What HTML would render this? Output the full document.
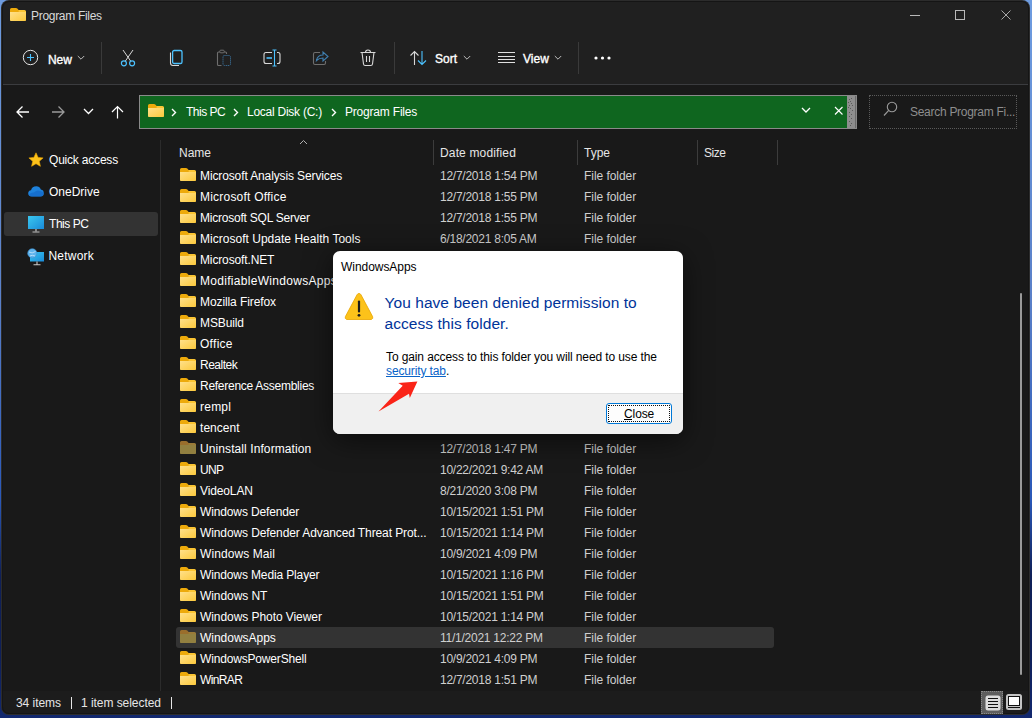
<!DOCTYPE html>
<html><head><meta charset='utf-8'><style>
html,body{margin:0;padding:0;width:1032px;height:718px;overflow:hidden;background:#191919}
body{position:relative;font-family:"Liberation Sans",sans-serif}
.r{position:absolute}
.t{position:absolute;white-space:nowrap;font-family:"Liberation Sans",sans-serif}
</style></head><body>
<svg width='0' height='0' style='position:absolute'><defs><linearGradient id='fg' x1='0' y1='0' x2='1' y2='1'><stop offset='0' stop-color='#ffe08a'/><stop offset='1' stop-color='#fcc93c'/></linearGradient><linearGradient id='mg' x1='0' y1='0' x2='1' y2='1'><stop offset='0' stop-color='#3ac8f0'/><stop offset='1' stop-color='#1a8ad8'/></linearGradient></defs></svg>
<div class='r' style='left:0;top:0;width:1032px;height:718px;background:linear-gradient(180deg,#6e9ce0 0px,#5a80c8 300px,#2a58b8 500px,#0f2058 575px,#0e1f58 650px,#12286f 718px)'></div><div class='r' style='left:1px;top:0px;width:1029px;height:715px;background:#202020;border-radius:8px;border:1px solid rgba(70,70,70,0.32);box-sizing:border-box;overflow:hidden'></div><div class='r' style='left:2px;top:85px;width:1027px;height:606px;background:#191919;'></div><div class='r' style='left:2px;top:84px;width:1027px;height:1px;background:#3b3c3f;'></div><div class='r' style='left:2px;top:691px;width:1027px;height:23px;background:#1c1c1c;border-radius:0 0 7px 7px'></div><div class='r' style='left:2px;top:1px;width:1027px;height:713px;border-radius:7px;box-shadow:inset 0 0 0 1px #151515'></div><svg class='r' style='left:10px;top:8px;' width='16' height='13' viewBox='0 0 16 13'><path d='M0 3 H16 V11.5 Q16 13 14.5 13 H1.5 Q0 13 0 11.5 Z M8 2 H14.5 Q16 2 16 3.5 V5 H8 Z' fill='#fac433'/><path d='M0 1.5 Q0 0 1.5 0 H6 Q6.8 0 7.3 0.6 L8.6 2 V4.5 H0 Z' fill='#edaa0b'/><path d='M0 4 H16 V11.5 Q16 13 14.5 13 H1.5 Q0 13 0 11.5 Z' fill='url(#fg)'/></svg><div class='t' style='left:31px;top:10px;font-size:12px;line-height:12px;color:#d9d9d9;letter-spacing:-0.3px;'>Program Files</div><div class='r' style='left:910px;top:15px;width:10px;height:1px;background:#b8b8b8;'></div><div class='r' style='left:955px;top:10px;width:10px;height:10px;background:transparent;border:1px solid #b8b8b8;box-sizing:border-box;'></div><svg class='r' style='left:1000px;top:9px;' width='12' height='12' viewBox='0 0 12 12'><path d='M1.5 1.5 L10.5 10.5 M10.5 1.5 L1.5 10.5' stroke='#b8b8b8' stroke-width='0.9'/></svg><svg class='r' style='left:22px;top:49px;' width='17' height='17' viewBox='0 0 17 17'><circle cx='8.5' cy='8.5' r='7.2' fill='none' stroke='#e6e6e6' stroke-width='1'/><path d='M8.5 5 V12 M5 8.5 H12' stroke='#4cc2ff' stroke-width='1.1'/></svg><div class='t' style='left:48px;top:54px;font-size:12px;line-height:12px;color:#ffffff;letter-spacing:-0.1px;-webkit-text-stroke:0.35px #fff;'>New</div><svg class='r' style='left:77px;top:55px;' width='8' height='6' viewBox='0 0 8 6'><path d='M0.8 1 L4 4.2 L7.2 1' fill='none' stroke='#bdbdbd' stroke-width='1'/></svg><div class='r' style='left:101px;top:42px;width:1px;height:32px;background:#3a3a3a;'></div><svg class='r' style='left:119px;top:49px;' width='18' height='18' viewBox='0 0 18 18'><path d='M4 1 L11.6 12 M14 1 L6.4 12' stroke='#d8d8d8' stroke-width='1'/><circle cx='4.9' cy='14.3' r='2.5' fill='none' stroke='#4cc2ff' stroke-width='1.2'/><circle cx='13.1' cy='14.3' r='2.5' fill='none' stroke='#4cc2ff' stroke-width='1.2'/></svg><svg class='r' style='left:168px;top:49px;' width='16' height='18' viewBox='0 0 16 18'><path d='M2.5 3.5 V14 Q2.5 16.5 5 16.5 H11' fill='none' stroke='#d8d8d8' stroke-width='1.1'/><rect x='4.6' y='1.5' width='9.4' height='13' rx='1.6' fill='none' stroke='#4cc2ff' stroke-width='1.3'/></svg><svg class='r' style='left:215px;top:49px;' width='18' height='18' viewBox='0 0 18 18'><path d='M5 3 H3.5 Q2.5 3 2.5 4 V15.5 Q2.5 16.5 3.5 16.5 H6.5 M9 3 H10.5 Q11.5 3 11.5 4 V5' fill='none' stroke='#6e6e6e' stroke-width='1.1'/><rect x='4.8' y='1.2' width='4.4' height='2.6' rx='1' fill='none' stroke='#6e6e6e' stroke-width='1'/><rect x='8' y='6.5' width='7.5' height='10' rx='1.5' fill='none' stroke='#3f7fb0' stroke-width='1' stroke-dasharray='1 1'/></svg><svg class='r' style='left:262px;top:49px;' width='20' height='18' viewBox='0 0 20 18'><path d='M10 3.5 H4 Q2 3.5 2 5.5 V12.5 Q2 14.5 4 14.5 H10 M15 3.5 H16 Q18 3.5 18 5.5 V12.5 Q18 14.5 16 14.5 H15' fill='none' stroke='#d8d8d8' stroke-width='1.1'/><path d='M12.5 1 V17 M10.5 1 H14.5 M10.5 17 H14.5' stroke='#4cc2ff' stroke-width='1.1'/><path d='M4.5 9 H10' stroke='#4cc2ff' stroke-width='1.6'/></svg><svg class='r' style='left:312px;top:49px;' width='18' height='18' viewBox='0 0 18 18'><path d='M8 3.5 H3 Q1.5 3.5 1.5 5 V14 Q1.5 15.5 3 15.5 H12 Q13.5 15.5 13.5 14 V12' fill='none' stroke='#6e6e6e' stroke-width='1.1'/><path d='M4.5 11.5 Q5.5 6 11 6 V3 L16 7.5 L11 12 V9 Q7 9 4.5 11.5 Z' fill='none' stroke='#3f7fb0' stroke-width='1.1'/></svg><svg class='r' style='left:359px;top:49px;' width='18' height='18' viewBox='0 0 18 18'><path d='M1.5 3.5 H16.5 M6.5 3.5 Q6.5 1 9 1 Q11.5 1 11.5 3.5' fill='none' stroke='#d8d8d8' stroke-width='1.1'/><path d='M3 3.5 L4.5 15 Q4.7 16.5 6.2 16.5 H11.8 Q13.3 16.5 13.5 15 L15 3.5' fill='none' stroke='#d8d8d8' stroke-width='1.1'/><path d='M7.5 7 V13 M10.5 7 V13' stroke='#d8d8d8' stroke-width='1.1'/></svg><div class='r' style='left:394px;top:42px;width:1px;height:32px;background:#3a3a3a;'></div><svg class='r' style='left:409px;top:50px;' width='20' height='16' viewBox='0 0 20 16'><path d='M5.5 15 V1.5 M1.5 5.5 L5.5 1.5 L9.5 5.5' fill='none' stroke='#d8d8d8' stroke-width='1.1'/><path d='M13 1 V14.5 M9 10.5 L13 14.5 L17 10.5' fill='none' stroke='#4cc2ff' stroke-width='1.1'/></svg><div class='t' style='left:435px;top:53px;font-size:12px;line-height:12px;color:#ffffff;letter-spacing:0px;-webkit-text-stroke:0.35px #fff;'>Sort</div><svg class='r' style='left:463px;top:55px;' width='8' height='6' viewBox='0 0 8 6'><path d='M0.8 1 L4 4.2 L7.2 1' fill='none' stroke='#bdbdbd' stroke-width='1'/></svg><svg class='r' style='left:498px;top:51px;' width='18' height='14' viewBox='0 0 18 14'><path d='M0 1.5 H17 M0 5.5 H17 M0 8.5 H17 M0 11.5 H17' stroke='#e0e0e0' stroke-width='1'/></svg><div class='t' style='left:523px;top:53px;font-size:12px;line-height:12px;color:#ffffff;letter-spacing:0px;-webkit-text-stroke:0.35px #fff;'>View</div><svg class='r' style='left:554px;top:55px;' width='8' height='6' viewBox='0 0 8 6'><path d='M0.8 1 L4 4.2 L7.2 1' fill='none' stroke='#bdbdbd' stroke-width='1'/></svg><div class='r' style='left:578px;top:42px;width:1px;height:32px;background:#3a3a3a;'></div><svg class='r' style='left:594px;top:56px;' width='18' height='4' viewBox='0 0 18 4'><circle cx='2' cy='2' r='1.6' fill='#fff'/><circle cx='8.5' cy='2' r='1.6' fill='#fff'/><circle cx='15' cy='2' r='1.6' fill='#fff'/></svg><svg class='r' style='left:16px;top:105px;' width='14' height='14' viewBox='0 0 14 14'><path d='M13 7 H1.5 M6.5 1.5 L1 7 L6.5 12.5' fill='none' stroke='#ffffff' stroke-width='1.3'/></svg><svg class='r' style='left:51px;top:105px;' width='14' height='14' viewBox='0 0 14 14'><path d='M1 7 H12.5 M7.5 1.5 L13 7 L7.5 12.5' fill='none' stroke='#9a9a9a' stroke-width='1.3'/></svg><svg class='r' style='left:83px;top:108px;' width='11' height='7' viewBox='0 0 11 7'><path d='M1 1 L5.5 5.5 L10 1' fill='none' stroke='#ffffff' stroke-width='1.3'/></svg><svg class='r' style='left:111px;top:105px;' width='13' height='14' viewBox='0 0 13 14'><path d='M6.5 13.5 V1.5 M1 7 L6.5 1.5 L12 7' fill='none' stroke='#ffffff' stroke-width='1.2'/></svg><div class='r' style='left:139px;top:95px;width:718px;height:34px;background:#0f661f;border:1px solid #8a8a8a;box-sizing:border-box;'></div><div class='r' style='left:847px;top:96px;width:9px;height:32px;background:#8e8e8e;border-right:1px solid #6a6a6a;box-sizing:border-box;'></div><div class='r' style='left:849px;top:99px;width:1px;height:1px;background:#5a5a5a;'></div><div class='r' style='left:851px;top:98px;width:1px;height:1px;background:#5a5a5a;'></div><div class='r' style='left:850px;top:101px;width:1px;height:1px;background:#5a5a5a;'></div><div class='r' style='left:848px;top:102px;width:1px;height:1px;background:#5a5a5a;'></div><div class='r' style='left:851px;top:103px;width:1px;height:1px;background:#5a5a5a;'></div><div class='r' style='left:849px;top:105px;width:1px;height:1px;background:#5a5a5a;'></div><div class='r' style='left:852px;top:105px;width:1px;height:1px;background:#5a5a5a;'></div><div class='r' style='left:848px;top:107px;width:1px;height:1px;background:#5a5a5a;'></div><div class='r' style='left:850px;top:108px;width:1px;height:1px;background:#5a5a5a;'></div><div class='r' style='left:852px;top:110px;width:1px;height:1px;background:#5a5a5a;'></div><div class='r' style='left:849px;top:112px;width:1px;height:1px;background:#5a5a5a;'></div><div class='r' style='left:851px;top:114px;width:1px;height:1px;background:#5a5a5a;'></div><div class='r' style='left:849px;top:116px;width:1px;height:1px;background:#5a5a5a;'></div><div class='r' style='left:851px;top:118px;width:1px;height:1px;background:#5a5a5a;'></div><div class='r' style='left:849px;top:121px;width:1px;height:1px;background:#5a5a5a;'></div><div class='r' style='left:851px;top:123px;width:1px;height:1px;background:#5a5a5a;'></div><div class='r' style='left:850px;top:125px;width:1px;height:1px;background:#5a5a5a;'></div><svg class='r' style='left:148px;top:104px;' width='16' height='13' viewBox='0 0 16 13'><path d='M0 3 H16 V11.5 Q16 13 14.5 13 H1.5 Q0 13 0 11.5 Z M8 2 H14.5 Q16 2 16 3.5 V5 H8 Z' fill='#fac433'/><path d='M0 1.5 Q0 0 1.5 0 H6 Q6.8 0 7.3 0.6 L8.6 2 V4.5 H0 Z' fill='#edaa0b'/><path d='M0 4 H16 V11.5 Q16 13 14.5 13 H1.5 Q0 13 0 11.5 Z' fill='url(#fg)'/></svg><svg class='r' style='left:171px;top:108px;' width='6' height='9' viewBox='0 0 6 9'><path d='M1 1 L4.5 4.5 L1 8' fill='none' stroke='#fff' stroke-width='1.4'/></svg><svg class='r' style='left:233px;top:108px;' width='6' height='9' viewBox='0 0 6 9'><path d='M1 1 L4.5 4.5 L1 8' fill='none' stroke='#fff' stroke-width='1.4'/></svg><svg class='r' style='left:331px;top:108px;' width='6' height='9' viewBox='0 0 6 9'><path d='M1 1 L4.5 4.5 L1 8' fill='none' stroke='#fff' stroke-width='1.4'/></svg><div class='t' style='left:186px;top:106px;font-size:12px;line-height:12px;color:#fff;letter-spacing:-0.5px;'>This PC</div><div class='t' style='left:247px;top:106px;font-size:12px;line-height:12px;color:#fff;letter-spacing:-0.25px;'>Local Disk (C:)</div><div class='t' style='left:345px;top:106px;font-size:12px;line-height:12px;color:#fff;letter-spacing:-0.2px;'>Program Files</div><svg class='r' style='left:801px;top:107px;' width='10' height='7' viewBox='0 0 10 7'><path d='M1 1 L5 5 L9 1' fill='none' stroke='#fff' stroke-width='1.3'/></svg><svg class='r' style='left:834px;top:106px;' width='10' height='10' viewBox='0 0 10 10'><path d='M1 1 L8.5 8.5 M8.5 1 L1 8.5' stroke='#fff' stroke-width='1.15'/></svg><div class='r' style='left:869px;top:95px;width:148px;height:34px;background:transparent;border:1px dotted #5a5a5a;box-sizing:border-box;'></div><svg class='r' style='left:883px;top:101px;' width='15' height='16' viewBox='0 0 15 16'><circle cx='9' cy='6' r='4.7' fill='none' stroke='#9a9a9a' stroke-width='1.1'/><path d='M5.7 9.3 L1 14.5' stroke='#9a9a9a' stroke-width='1.2'/></svg><div class='t' style='left:910px;top:106px;font-size:12px;line-height:12px;color:#8e8e8e;letter-spacing:-0.28px;'>Search Program Fi...</div><div class='r' style='left:4px;top:212px;width:154px;height:24px;background:#333333;border-radius:3px;'></div><div class='r' style='left:160px;top:140px;width:1px;height:551px;background:#2b2b2b;'></div><svg class='r' style='left:28px;top:152px;' width='16' height='16' viewBox='0 0 16 16'><path d='M8 0.8 L10.1 5.4 L15.1 5.9 L11.3 9.3 L12.4 14.3 L8 11.7 L3.6 14.3 L4.7 9.3 L0.9 5.9 L5.9 5.4 Z' fill='#fcc21b' stroke='#f0a800' stroke-width='0.6' stroke-linejoin='round'/></svg><svg class='r' style='left:28px;top:185px;' width='16' height='12' viewBox='0 0 16 12'><path d='M4 11.5 Q0.2 11.5 0.2 8.3 Q0.2 5.6 3 5.2 Q4 1.3 8.3 1.3 Q11.6 1.3 12.8 4.6 Q15.8 5 15.8 8.2 Q15.8 11.5 12.5 11.5 Z' fill='#1e82dc'/><path d='M3 11.5 Q1 11.5 1.6 9 Q3 7 6 7.5 Q9 4.5 12 6 Q15.8 6.5 15.5 9.5 Q15 11.5 12.5 11.5 Z' fill='#1366c8' opacity='0.7'/></svg><svg class='r' style='left:28px;top:212px;' width='16' height='22' viewBox='0 0 16 22'><rect x='0' y='4' width='16' height='13' fill='url(#mg)'/><path d='M8 17 V19.5' stroke='#c8c8c8' stroke-width='1.2'/><path d='M4.5 20 H11.5' stroke='#bdbdbd' stroke-width='1'/></svg><svg class='r' style='left:27px;top:248px;' width='18' height='18' viewBox='0 0 18 18'><rect x='3' y='4' width='14' height='9.5' fill='url(#mg)'/><circle cx='5.3' cy='5.3' r='4.6' fill='#5fb4ec' stroke='#3c8fd0' stroke-width='0.6'/><path d='M2 4 Q5 6 8.5 3.5 M3 8 Q5 6.5 8 8' fill='none' stroke='#d9efff' stroke-width='0.7'/><path d='M10 13.5 V16.5 M6.5 16.8 H13.5' stroke='#c8c8c8' stroke-width='1.1'/></svg><div class='t' style='left:49px;top:154px;font-size:12px;line-height:12px;color:#fff;letter-spacing:-0.2px;'>Quick access</div><div class='t' style='left:49px;top:186px;font-size:12px;line-height:12px;color:#fff;letter-spacing:0px;'>OneDrive</div><div class='t' style='left:49px;top:218px;font-size:12px;line-height:12px;color:#fff;letter-spacing:-0.45px;'>This PC</div><div class='t' style='left:48.5px;top:250px;font-size:12px;line-height:12px;color:#fff;letter-spacing:0.2px;'>Network</div><svg class='r' style='left:299px;top:139px;' width='9' height='6' viewBox='0 0 9 6'><path d='M1 5 L4.5 1.5 L8 5' fill='none' stroke='#b0b0b0' stroke-width='1'/></svg><div class='t' style='left:179px;top:147px;font-size:12px;line-height:12px;color:#e6e6e6;'>Name</div><div class='t' style='left:440px;top:147px;font-size:12px;line-height:12px;color:#e6e6e6;letter-spacing:0.15px;'>Date modified</div><div class='t' style='left:584px;top:147px;font-size:12px;line-height:12px;color:#e6e6e6;'>Type</div><div class='t' style='left:704px;top:147px;font-size:12px;line-height:12px;color:#e6e6e6;letter-spacing:-0.5px;'>Size</div><div class='r' style='left:433px;top:140px;width:1px;height:25px;background:#3c3c3c;'></div><div class='r' style='left:577px;top:140px;width:1px;height:25px;background:#3c3c3c;'></div><div class='r' style='left:697px;top:140px;width:1px;height:25px;background:#3c3c3c;'></div><div class='r' style='left:777px;top:140px;width:1px;height:25px;background:#3c3c3c;'></div><div class='r' style='left:176px;top:627px;width:598px;height:21px;background:#333333;border-radius:3px;'></div><svg class='r' style='left:180px;top:168px;' width='16' height='13' viewBox='0 0 16 13'><path d='M0 3 H16 V11.5 Q16 13 14.5 13 H1.5 Q0 13 0 11.5 Z M8 2 H14.5 Q16 2 16 3.5 V5 H8 Z' fill='#fac433'/><path d='M0 1.5 Q0 0 1.5 0 H6 Q6.8 0 7.3 0.6 L8.6 2 V4.5 H0 Z' fill='#edaa0b'/><path d='M0 4 H16 V11.5 Q16 13 14.5 13 H1.5 Q0 13 0 11.5 Z' fill='url(#fg)'/></svg><div class='t' style='left:200px;top:170px;font-size:12px;line-height:12px;color:#fff;letter-spacing:-0.12px;'>Microsoft Analysis Services</div><div class='t' style='left:440px;top:170px;font-size:12px;line-height:12px;color:#cfcfcf;letter-spacing:-0.25px;'>12/7/2018 1:54 PM</div><div class='t' style='left:584px;top:170px;font-size:12px;line-height:12px;color:#cfcfcf;letter-spacing:-0.05px;'>File folder</div><svg class='r' style='left:180px;top:189px;' width='16' height='13' viewBox='0 0 16 13'><path d='M0 3 H16 V11.5 Q16 13 14.5 13 H1.5 Q0 13 0 11.5 Z M8 2 H14.5 Q16 2 16 3.5 V5 H8 Z' fill='#fac433'/><path d='M0 1.5 Q0 0 1.5 0 H6 Q6.8 0 7.3 0.6 L8.6 2 V4.5 H0 Z' fill='#edaa0b'/><path d='M0 4 H16 V11.5 Q16 13 14.5 13 H1.5 Q0 13 0 11.5 Z' fill='url(#fg)'/></svg><div class='t' style='left:200px;top:191px;font-size:12px;line-height:12px;color:#fff;letter-spacing:0.213px;'>Microsoft Office</div><div class='t' style='left:440px;top:191px;font-size:12px;line-height:12px;color:#cfcfcf;letter-spacing:-0.25px;'>12/7/2018 1:55 PM</div><div class='t' style='left:584px;top:191px;font-size:12px;line-height:12px;color:#cfcfcf;letter-spacing:-0.05px;'>File folder</div><svg class='r' style='left:180px;top:210px;' width='16' height='13' viewBox='0 0 16 13'><path d='M0 3 H16 V11.5 Q16 13 14.5 13 H1.5 Q0 13 0 11.5 Z M8 2 H14.5 Q16 2 16 3.5 V5 H8 Z' fill='#fac433'/><path d='M0 1.5 Q0 0 1.5 0 H6 Q6.8 0 7.3 0.6 L8.6 2 V4.5 H0 Z' fill='#edaa0b'/><path d='M0 4 H16 V11.5 Q16 13 14.5 13 H1.5 Q0 13 0 11.5 Z' fill='url(#fg)'/></svg><div class='t' style='left:200px;top:212px;font-size:12px;line-height:12px;color:#fff;letter-spacing:-0.225px;'>Microsoft SQL Server</div><div class='t' style='left:440px;top:212px;font-size:12px;line-height:12px;color:#cfcfcf;letter-spacing:-0.25px;'>12/7/2018 1:55 PM</div><div class='t' style='left:584px;top:212px;font-size:12px;line-height:12px;color:#cfcfcf;letter-spacing:-0.05px;'>File folder</div><svg class='r' style='left:180px;top:231px;' width='16' height='13' viewBox='0 0 16 13'><path d='M0 3 H16 V11.5 Q16 13 14.5 13 H1.5 Q0 13 0 11.5 Z M8 2 H14.5 Q16 2 16 3.5 V5 H8 Z' fill='#fac433'/><path d='M0 1.5 Q0 0 1.5 0 H6 Q6.8 0 7.3 0.6 L8.6 2 V4.5 H0 Z' fill='#edaa0b'/><path d='M0 4 H16 V11.5 Q16 13 14.5 13 H1.5 Q0 13 0 11.5 Z' fill='url(#fg)'/></svg><div class='t' style='left:200px;top:233px;font-size:12px;line-height:12px;color:#fff;letter-spacing:0.023px;'>Microsoft Update Health Tools</div><div class='t' style='left:440px;top:233px;font-size:12px;line-height:12px;color:#cfcfcf;letter-spacing:-0.25px;'>6/18/2021 8:05 AM</div><div class='t' style='left:584px;top:233px;font-size:12px;line-height:12px;color:#cfcfcf;letter-spacing:-0.05px;'>File folder</div><svg class='r' style='left:180px;top:252px;' width='16' height='13' viewBox='0 0 16 13'><path d='M0 3 H16 V11.5 Q16 13 14.5 13 H1.5 Q0 13 0 11.5 Z M8 2 H14.5 Q16 2 16 3.5 V5 H8 Z' fill='#fac433'/><path d='M0 1.5 Q0 0 1.5 0 H6 Q6.8 0 7.3 0.6 L8.6 2 V4.5 H0 Z' fill='#edaa0b'/><path d='M0 4 H16 V11.5 Q16 13 14.5 13 H1.5 Q0 13 0 11.5 Z' fill='url(#fg)'/></svg><div class='t' style='left:200px;top:254px;font-size:12px;line-height:12px;color:#fff;letter-spacing:-0.136px;'>Microsoft.NET</div><div class='t' style='left:440px;top:254px;font-size:12px;line-height:12px;color:#cfcfcf;letter-spacing:-0.25px;'>12/7/2018 1:55 PM</div><div class='t' style='left:584px;top:254px;font-size:12px;line-height:12px;color:#cfcfcf;letter-spacing:-0.05px;'>File folder</div><svg class='r' style='left:180px;top:273px;' width='16' height='13' viewBox='0 0 16 13'><path d='M0 3 H16 V11.5 Q16 13 14.5 13 H1.5 Q0 13 0 11.5 Z M8 2 H14.5 Q16 2 16 3.5 V5 H8 Z' fill='#fac433'/><path d='M0 1.5 Q0 0 1.5 0 H6 Q6.8 0 7.3 0.6 L8.6 2 V4.5 H0 Z' fill='#edaa0b'/><path d='M0 4 H16 V11.5 Q16 13 14.5 13 H1.5 Q0 13 0 11.5 Z' fill='url(#fg)'/></svg><div class='t' style='left:200px;top:275px;font-size:12px;line-height:12px;color:#fff;letter-spacing:0.3px;'>ModifiableWindowsApps</div><div class='t' style='left:440px;top:275px;font-size:12px;line-height:12px;color:#cfcfcf;letter-spacing:-0.25px;'>12/7/2019 4:14 PM</div><div class='t' style='left:584px;top:275px;font-size:12px;line-height:12px;color:#cfcfcf;letter-spacing:-0.05px;'>File folder</div><svg class='r' style='left:180px;top:294px;' width='16' height='13' viewBox='0 0 16 13'><path d='M0 3 H16 V11.5 Q16 13 14.5 13 H1.5 Q0 13 0 11.5 Z M8 2 H14.5 Q16 2 16 3.5 V5 H8 Z' fill='#fac433'/><path d='M0 1.5 Q0 0 1.5 0 H6 Q6.8 0 7.3 0.6 L8.6 2 V4.5 H0 Z' fill='#edaa0b'/><path d='M0 4 H16 V11.5 Q16 13 14.5 13 H1.5 Q0 13 0 11.5 Z' fill='url(#fg)'/></svg><div class='t' style='left:200px;top:296px;font-size:12px;line-height:12px;color:#fff;letter-spacing:-0.092px;'>Mozilla Firefox</div><div class='t' style='left:440px;top:296px;font-size:12px;line-height:12px;color:#cfcfcf;letter-spacing:-0.25px;'>11/2/2021 9:23 AM</div><div class='t' style='left:584px;top:296px;font-size:12px;line-height:12px;color:#cfcfcf;letter-spacing:-0.05px;'>File folder</div><svg class='r' style='left:180px;top:315px;' width='16' height='13' viewBox='0 0 16 13'><path d='M0 3 H16 V11.5 Q16 13 14.5 13 H1.5 Q0 13 0 11.5 Z M8 2 H14.5 Q16 2 16 3.5 V5 H8 Z' fill='#fac433'/><path d='M0 1.5 Q0 0 1.5 0 H6 Q6.8 0 7.3 0.6 L8.6 2 V4.5 H0 Z' fill='#edaa0b'/><path d='M0 4 H16 V11.5 Q16 13 14.5 13 H1.5 Q0 13 0 11.5 Z' fill='url(#fg)'/></svg><div class='t' style='left:200px;top:317px;font-size:12px;line-height:12px;color:#fff;letter-spacing:-0.12px;'>MSBuild</div><div class='t' style='left:440px;top:317px;font-size:12px;line-height:12px;color:#cfcfcf;letter-spacing:-0.25px;'>12/7/2018 1:55 PM</div><div class='t' style='left:584px;top:317px;font-size:12px;line-height:12px;color:#cfcfcf;letter-spacing:-0.05px;'>File folder</div><svg class='r' style='left:180px;top:336px;' width='16' height='13' viewBox='0 0 16 13'><path d='M0 3 H16 V11.5 Q16 13 14.5 13 H1.5 Q0 13 0 11.5 Z M8 2 H14.5 Q16 2 16 3.5 V5 H8 Z' fill='#fac433'/><path d='M0 1.5 Q0 0 1.5 0 H6 Q6.8 0 7.3 0.6 L8.6 2 V4.5 H0 Z' fill='#edaa0b'/><path d='M0 4 H16 V11.5 Q16 13 14.5 13 H1.5 Q0 13 0 11.5 Z' fill='url(#fg)'/></svg><div class='t' style='left:200px;top:338px;font-size:12px;line-height:12px;color:#fff;letter-spacing:0.28px;'>Office</div><div class='t' style='left:440px;top:338px;font-size:12px;line-height:12px;color:#cfcfcf;letter-spacing:-0.25px;'>10/9/2021 4:12 PM</div><div class='t' style='left:584px;top:338px;font-size:12px;line-height:12px;color:#cfcfcf;letter-spacing:-0.05px;'>File folder</div><svg class='r' style='left:180px;top:357px;' width='16' height='13' viewBox='0 0 16 13'><path d='M0 3 H16 V11.5 Q16 13 14.5 13 H1.5 Q0 13 0 11.5 Z M8 2 H14.5 Q16 2 16 3.5 V5 H8 Z' fill='#fac433'/><path d='M0 1.5 Q0 0 1.5 0 H6 Q6.8 0 7.3 0.6 L8.6 2 V4.5 H0 Z' fill='#edaa0b'/><path d='M0 4 H16 V11.5 Q16 13 14.5 13 H1.5 Q0 13 0 11.5 Z' fill='url(#fg)'/></svg><div class='t' style='left:200px;top:359px;font-size:12px;line-height:12px;color:#fff;letter-spacing:-0.487px;'>Realtek</div><div class='t' style='left:440px;top:359px;font-size:12px;line-height:12px;color:#cfcfcf;letter-spacing:-0.25px;'>10/15/2021 1:10 PM</div><div class='t' style='left:584px;top:359px;font-size:12px;line-height:12px;color:#cfcfcf;letter-spacing:-0.05px;'>File folder</div><svg class='r' style='left:180px;top:378px;' width='16' height='13' viewBox='0 0 16 13'><path d='M0 3 H16 V11.5 Q16 13 14.5 13 H1.5 Q0 13 0 11.5 Z M8 2 H14.5 Q16 2 16 3.5 V5 H8 Z' fill='#fac433'/><path d='M0 1.5 Q0 0 1.5 0 H6 Q6.8 0 7.3 0.6 L8.6 2 V4.5 H0 Z' fill='#edaa0b'/><path d='M0 4 H16 V11.5 Q16 13 14.5 13 H1.5 Q0 13 0 11.5 Z' fill='url(#fg)'/></svg><div class='t' style='left:200px;top:380px;font-size:12px;line-height:12px;color:#fff;letter-spacing:-0.268px;'>Reference Assemblies</div><div class='t' style='left:440px;top:380px;font-size:12px;line-height:12px;color:#cfcfcf;letter-spacing:-0.25px;'>12/7/2018 1:55 PM</div><div class='t' style='left:584px;top:380px;font-size:12px;line-height:12px;color:#cfcfcf;letter-spacing:-0.05px;'>File folder</div><svg class='r' style='left:180px;top:399px;' width='16' height='13' viewBox='0 0 16 13'><path d='M0 3 H16 V11.5 Q16 13 14.5 13 H1.5 Q0 13 0 11.5 Z M8 2 H14.5 Q16 2 16 3.5 V5 H8 Z' fill='#fac433'/><path d='M0 1.5 Q0 0 1.5 0 H6 Q6.8 0 7.3 0.6 L8.6 2 V4.5 H0 Z' fill='#edaa0b'/><path d='M0 4 H16 V11.5 Q16 13 14.5 13 H1.5 Q0 13 0 11.5 Z' fill='url(#fg)'/></svg><div class='t' style='left:200px;top:401px;font-size:12px;line-height:12px;color:#fff;letter-spacing:0.23px;'>rempl</div><div class='t' style='left:440px;top:401px;font-size:12px;line-height:12px;color:#cfcfcf;letter-spacing:-0.25px;'>10/22/2021 9:40 AM</div><div class='t' style='left:584px;top:401px;font-size:12px;line-height:12px;color:#cfcfcf;letter-spacing:-0.05px;'>File folder</div><svg class='r' style='left:180px;top:420px;' width='16' height='13' viewBox='0 0 16 13'><path d='M0 3 H16 V11.5 Q16 13 14.5 13 H1.5 Q0 13 0 11.5 Z M8 2 H14.5 Q16 2 16 3.5 V5 H8 Z' fill='#fac433'/><path d='M0 1.5 Q0 0 1.5 0 H6 Q6.8 0 7.3 0.6 L8.6 2 V4.5 H0 Z' fill='#edaa0b'/><path d='M0 4 H16 V11.5 Q16 13 14.5 13 H1.5 Q0 13 0 11.5 Z' fill='url(#fg)'/></svg><div class='t' style='left:200px;top:422px;font-size:12px;line-height:12px;color:#fff;letter-spacing:0.047px;'>tencent</div><div class='t' style='left:440px;top:422px;font-size:12px;line-height:12px;color:#cfcfcf;letter-spacing:-0.25px;'>10/9/2021 4:09 PM</div><div class='t' style='left:584px;top:422px;font-size:12px;line-height:12px;color:#cfcfcf;letter-spacing:-0.05px;'>File folder</div><svg class='r' style='left:180px;top:441px;' width='16' height='13' viewBox='0 0 16 13'><path d='M0 3 H16 V11.5 Q16 13 14.5 13 H1.5 Q0 13 0 11.5 Z M8 2 H14.5 Q16 2 16 3.5 V5 H8 Z' fill='#9a7a38'/><path d='M0 1.5 Q0 0 1.5 0 H6 Q6.8 0 7.3 0.6 L8.6 2 V4.5 H0 Z' fill='#9a6e2c'/><path d='M0 4 H16 V11.5 Q16 13 14.5 13 H1.5 Q0 13 0 11.5 Z' fill='#928040'/></svg><div class='t' style='left:200px;top:443px;font-size:12px;line-height:12px;color:#fff;letter-spacing:0.09px;'>Uninstall Information</div><div class='t' style='left:440px;top:443px;font-size:12px;line-height:12px;color:#cfcfcf;letter-spacing:-0.25px;'>12/7/2018 1:47 PM</div><div class='t' style='left:584px;top:443px;font-size:12px;line-height:12px;color:#cfcfcf;letter-spacing:-0.05px;'>File folder</div><svg class='r' style='left:180px;top:462px;' width='16' height='13' viewBox='0 0 16 13'><path d='M0 3 H16 V11.5 Q16 13 14.5 13 H1.5 Q0 13 0 11.5 Z M8 2 H14.5 Q16 2 16 3.5 V5 H8 Z' fill='#fac433'/><path d='M0 1.5 Q0 0 1.5 0 H6 Q6.8 0 7.3 0.6 L8.6 2 V4.5 H0 Z' fill='#edaa0b'/><path d='M0 4 H16 V11.5 Q16 13 14.5 13 H1.5 Q0 13 0 11.5 Z' fill='url(#fg)'/></svg><div class='t' style='left:200px;top:464px;font-size:12px;line-height:12px;color:#fff;letter-spacing:-0.72px;'>UNP</div><div class='t' style='left:440px;top:464px;font-size:12px;line-height:12px;color:#cfcfcf;letter-spacing:-0.25px;'>10/22/2021 9:42 AM</div><div class='t' style='left:584px;top:464px;font-size:12px;line-height:12px;color:#cfcfcf;letter-spacing:-0.05px;'>File folder</div><svg class='r' style='left:180px;top:483px;' width='16' height='13' viewBox='0 0 16 13'><path d='M0 3 H16 V11.5 Q16 13 14.5 13 H1.5 Q0 13 0 11.5 Z M8 2 H14.5 Q16 2 16 3.5 V5 H8 Z' fill='#fac433'/><path d='M0 1.5 Q0 0 1.5 0 H6 Q6.8 0 7.3 0.6 L8.6 2 V4.5 H0 Z' fill='#edaa0b'/><path d='M0 4 H16 V11.5 Q16 13 14.5 13 H1.5 Q0 13 0 11.5 Z' fill='url(#fg)'/></svg><div class='t' style='left:200px;top:485px;font-size:12px;line-height:12px;color:#fff;letter-spacing:-0.12px;'>VideoLAN</div><div class='t' style='left:440px;top:485px;font-size:12px;line-height:12px;color:#cfcfcf;letter-spacing:-0.25px;'>8/21/2020 3:08 PM</div><div class='t' style='left:584px;top:485px;font-size:12px;line-height:12px;color:#cfcfcf;letter-spacing:-0.05px;'>File folder</div><svg class='r' style='left:180px;top:504px;' width='16' height='13' viewBox='0 0 16 13'><path d='M0 3 H16 V11.5 Q16 13 14.5 13 H1.5 Q0 13 0 11.5 Z M8 2 H14.5 Q16 2 16 3.5 V5 H8 Z' fill='#fac433'/><path d='M0 1.5 Q0 0 1.5 0 H6 Q6.8 0 7.3 0.6 L8.6 2 V4.5 H0 Z' fill='#edaa0b'/><path d='M0 4 H16 V11.5 Q16 13 14.5 13 H1.5 Q0 13 0 11.5 Z' fill='url(#fg)'/></svg><div class='t' style='left:200px;top:506px;font-size:12px;line-height:12px;color:#fff;letter-spacing:-0.134px;'>Windows Defender</div><div class='t' style='left:440px;top:506px;font-size:12px;line-height:12px;color:#cfcfcf;letter-spacing:-0.25px;'>10/15/2021 1:51 PM</div><div class='t' style='left:584px;top:506px;font-size:12px;line-height:12px;color:#cfcfcf;letter-spacing:-0.05px;'>File folder</div><svg class='r' style='left:180px;top:525px;' width='16' height='13' viewBox='0 0 16 13'><path d='M0 3 H16 V11.5 Q16 13 14.5 13 H1.5 Q0 13 0 11.5 Z M8 2 H14.5 Q16 2 16 3.5 V5 H8 Z' fill='#fac433'/><path d='M0 1.5 Q0 0 1.5 0 H6 Q6.8 0 7.3 0.6 L8.6 2 V4.5 H0 Z' fill='#edaa0b'/><path d='M0 4 H16 V11.5 Q16 13 14.5 13 H1.5 Q0 13 0 11.5 Z' fill='url(#fg)'/></svg><div class='t' style='left:200px;top:527px;font-size:12px;line-height:12px;color:#fff;letter-spacing:-0.104px;'>Windows Defender Advanced Threat Prot...</div><div class='t' style='left:440px;top:527px;font-size:12px;line-height:12px;color:#cfcfcf;letter-spacing:-0.25px;'>10/15/2021 1:14 PM</div><div class='t' style='left:584px;top:527px;font-size:12px;line-height:12px;color:#cfcfcf;letter-spacing:-0.05px;'>File folder</div><svg class='r' style='left:180px;top:546px;' width='16' height='13' viewBox='0 0 16 13'><path d='M0 3 H16 V11.5 Q16 13 14.5 13 H1.5 Q0 13 0 11.5 Z M8 2 H14.5 Q16 2 16 3.5 V5 H8 Z' fill='#fac433'/><path d='M0 1.5 Q0 0 1.5 0 H6 Q6.8 0 7.3 0.6 L8.6 2 V4.5 H0 Z' fill='#edaa0b'/><path d='M0 4 H16 V11.5 Q16 13 14.5 13 H1.5 Q0 13 0 11.5 Z' fill='url(#fg)'/></svg><div class='t' style='left:200px;top:548px;font-size:12px;line-height:12px;color:#fff;letter-spacing:0.08px;'>Windows Mail</div><div class='t' style='left:440px;top:548px;font-size:12px;line-height:12px;color:#cfcfcf;letter-spacing:-0.25px;'>10/9/2021 4:09 PM</div><div class='t' style='left:584px;top:548px;font-size:12px;line-height:12px;color:#cfcfcf;letter-spacing:-0.05px;'>File folder</div><svg class='r' style='left:180px;top:567px;' width='16' height='13' viewBox='0 0 16 13'><path d='M0 3 H16 V11.5 Q16 13 14.5 13 H1.5 Q0 13 0 11.5 Z M8 2 H14.5 Q16 2 16 3.5 V5 H8 Z' fill='#fac433'/><path d='M0 1.5 Q0 0 1.5 0 H6 Q6.8 0 7.3 0.6 L8.6 2 V4.5 H0 Z' fill='#edaa0b'/><path d='M0 4 H16 V11.5 Q16 13 14.5 13 H1.5 Q0 13 0 11.5 Z' fill='url(#fg)'/></svg><div class='t' style='left:200px;top:569px;font-size:12px;line-height:12px;color:#fff;letter-spacing:-0.13px;'>Windows Media Player</div><div class='t' style='left:440px;top:569px;font-size:12px;line-height:12px;color:#cfcfcf;letter-spacing:-0.25px;'>10/15/2021 1:16 PM</div><div class='t' style='left:584px;top:569px;font-size:12px;line-height:12px;color:#cfcfcf;letter-spacing:-0.05px;'>File folder</div><svg class='r' style='left:180px;top:588px;' width='16' height='13' viewBox='0 0 16 13'><path d='M0 3 H16 V11.5 Q16 13 14.5 13 H1.5 Q0 13 0 11.5 Z M8 2 H14.5 Q16 2 16 3.5 V5 H8 Z' fill='#fac433'/><path d='M0 1.5 Q0 0 1.5 0 H6 Q6.8 0 7.3 0.6 L8.6 2 V4.5 H0 Z' fill='#edaa0b'/><path d='M0 4 H16 V11.5 Q16 13 14.5 13 H1.5 Q0 13 0 11.5 Z' fill='url(#fg)'/></svg><div class='t' style='left:200px;top:590px;font-size:12px;line-height:12px;color:#fff;letter-spacing:-0.076px;'>Windows NT</div><div class='t' style='left:440px;top:590px;font-size:12px;line-height:12px;color:#cfcfcf;letter-spacing:-0.25px;'>10/15/2021 1:51 PM</div><div class='t' style='left:584px;top:590px;font-size:12px;line-height:12px;color:#cfcfcf;letter-spacing:-0.05px;'>File folder</div><svg class='r' style='left:180px;top:609px;' width='16' height='13' viewBox='0 0 16 13'><path d='M0 3 H16 V11.5 Q16 13 14.5 13 H1.5 Q0 13 0 11.5 Z M8 2 H14.5 Q16 2 16 3.5 V5 H8 Z' fill='#fac433'/><path d='M0 1.5 Q0 0 1.5 0 H6 Q6.8 0 7.3 0.6 L8.6 2 V4.5 H0 Z' fill='#edaa0b'/><path d='M0 4 H16 V11.5 Q16 13 14.5 13 H1.5 Q0 13 0 11.5 Z' fill='url(#fg)'/></svg><div class='t' style='left:200px;top:611px;font-size:12px;line-height:12px;color:#fff;letter-spacing:-0.067px;'>Windows Photo Viewer</div><div class='t' style='left:440px;top:611px;font-size:12px;line-height:12px;color:#cfcfcf;letter-spacing:-0.25px;'>10/15/2021 1:14 PM</div><div class='t' style='left:584px;top:611px;font-size:12px;line-height:12px;color:#cfcfcf;letter-spacing:-0.05px;'>File folder</div><svg class='r' style='left:180px;top:630px;' width='16' height='13' viewBox='0 0 16 13'><path d='M0 3 H16 V11.5 Q16 13 14.5 13 H1.5 Q0 13 0 11.5 Z M8 2 H14.5 Q16 2 16 3.5 V5 H8 Z' fill='#9a7a38'/><path d='M0 1.5 Q0 0 1.5 0 H6 Q6.8 0 7.3 0.6 L8.6 2 V4.5 H0 Z' fill='#9a6e2c'/><path d='M0 4 H16 V11.5 Q16 13 14.5 13 H1.5 Q0 13 0 11.5 Z' fill='#928040'/></svg><div class='t' style='left:200px;top:632px;font-size:12px;line-height:12px;color:#fff;letter-spacing:-0.02px;'>WindowsApps</div><div class='t' style='left:440px;top:632px;font-size:12px;line-height:12px;color:#cfcfcf;letter-spacing:-0.25px;'>11/1/2021 12:22 PM</div><div class='t' style='left:584px;top:632px;font-size:12px;line-height:12px;color:#cfcfcf;letter-spacing:-0.05px;'>File folder</div><svg class='r' style='left:180px;top:651px;' width='16' height='13' viewBox='0 0 16 13'><path d='M0 3 H16 V11.5 Q16 13 14.5 13 H1.5 Q0 13 0 11.5 Z M8 2 H14.5 Q16 2 16 3.5 V5 H8 Z' fill='#fac433'/><path d='M0 1.5 Q0 0 1.5 0 H6 Q6.8 0 7.3 0.6 L8.6 2 V4.5 H0 Z' fill='#edaa0b'/><path d='M0 4 H16 V11.5 Q16 13 14.5 13 H1.5 Q0 13 0 11.5 Z' fill='url(#fg)'/></svg><div class='t' style='left:200px;top:653px;font-size:12px;line-height:12px;color:#fff;letter-spacing:-0.17px;'>WindowsPowerShell</div><div class='t' style='left:440px;top:653px;font-size:12px;line-height:12px;color:#cfcfcf;letter-spacing:-0.25px;'>10/9/2021 4:09 PM</div><div class='t' style='left:584px;top:653px;font-size:12px;line-height:12px;color:#cfcfcf;letter-spacing:-0.05px;'>File folder</div><svg class='r' style='left:180px;top:672px;' width='16' height='13' viewBox='0 0 16 13'><path d='M0 3 H16 V11.5 Q16 13 14.5 13 H1.5 Q0 13 0 11.5 Z M8 2 H14.5 Q16 2 16 3.5 V5 H8 Z' fill='#fac433'/><path d='M0 1.5 Q0 0 1.5 0 H6 Q6.8 0 7.3 0.6 L8.6 2 V4.5 H0 Z' fill='#edaa0b'/><path d='M0 4 H16 V11.5 Q16 13 14.5 13 H1.5 Q0 13 0 11.5 Z' fill='url(#fg)'/></svg><div class='t' style='left:200px;top:674px;font-size:12px;line-height:12px;color:#fff;letter-spacing:-0.64px;'>WinRAR</div><div class='t' style='left:440px;top:674px;font-size:12px;line-height:12px;color:#cfcfcf;letter-spacing:-0.25px;'>12/7/2018 1:51 PM</div><div class='t' style='left:584px;top:674px;font-size:12px;line-height:12px;color:#cfcfcf;letter-spacing:-0.05px;'>File folder</div><div class='r' style='left:1020px;top:293px;width:2px;height:382px;background:#9a9a9a;border-radius:1px;'></div><div class='t' style='left:16px;top:697px;font-size:12px;line-height:12px;color:#e6e6e6;letter-spacing:-0.05px;'>34 items</div><div class='r' style='left:71px;top:697px;width:1px;height:12px;background:#e6e6e6;'></div><div class='t' style='left:81px;top:697px;font-size:12px;line-height:12px;color:#e6e6e6;letter-spacing:-0.05px;'>1 item selected</div><div class='r' style='left:171px;top:697px;width:1px;height:12px;background:#e6e6e6;'></div><div class='r' style='left:981px;top:691px;width:22px;height:23px;background:#5e5e5e;border:1px dotted #8a8a8a;box-sizing:border-box;'></div><svg class='r' style='left:985px;top:695px;' width='16' height='16' viewBox='0 0 16 16'><rect x='0.5' y='0.5' width='15' height='15' rx='2.5' fill='#dcdcdc'/><path d='M3 3.5 H13 M3 6.5 H13 M3 9.5 H13 M3 12.5 H13' stroke='#111' stroke-width='1.2'/></svg><svg class='r' style='left:1006px;top:694px;' width='16' height='16' viewBox='0 0 16 16'><rect x='0' y='0' width='16' height='16' rx='2.5' fill='#c4c4c4'/><rect x='2' y='2' width='12' height='10' fill='#111'/><rect x='3' y='3' width='10' height='8' fill='#fff'/><path d='M2 13.5 H14' stroke='#111' stroke-width='1'/></svg><div class='r' style='left:333px;top:251px;width:350px;height:183px;background:#ffffff;border-radius:7px;box-shadow:0 6px 28px rgba(0,0,0,0.55);overflow:hidden'><div style='position:absolute;left:0;top:142px;width:350px;height:41px;background:#f0f0f0;border-top:1px solid #dfdfdf'></div></div><div class='t' style='left:341px;top:261px;font-size:12px;line-height:12px;color:#000;letter-spacing:-0.05px;'>WindowsApps</div><svg class='r' style='left:344px;top:292px;' width='30' height='30' viewBox='0 0 30 30'><path d='M15 1.5 Q16.3 1.5 17 2.8 L28.6 24.6 Q29.5 26.5 27.4 27.5 H2.6 Q0.5 26.5 1.4 24.6 L13 2.8 Q13.7 1.5 15 1.5 Z' fill='#fcc21a' stroke='#e8a500' stroke-width='0.8'/><path d='M15 9.5 V19.5' stroke='#1b1b1b' stroke-width='2.2' stroke-linecap='round'/><circle cx='15' cy='23.3' r='1.4' fill='#1b1b1b'/></svg><div class='t' style='left:384.5px;top:295px;font-size:15.5px;line-height:15.5px;color:#003399;letter-spacing:0.06px;'>You have been denied permission to</div><div class='t' style='left:384.5px;top:316px;font-size:15.5px;line-height:15.5px;color:#003399;letter-spacing:0.06px;'>access this folder.</div><div class='t' style='left:386px;top:351px;font-size:12px;line-height:12px;color:#000;letter-spacing:-0.11px;'>To gain access to this folder you will need to use the</div><div class='t' style='left:386px;top:365px;font-size:12px;line-height:12px;color:#0a64c8;letter-spacing:-0.12px;text-decoration:underline;'>security tab</div><div class='t' style='left:446px;top:365px;font-size:12px;line-height:12px;color:#000;'>.</div><div class='r' style='left:606px;top:403px;width:66px;height:21px;background:#fdfdfd;border:1px solid #0078d7;box-sizing:border-box;border-radius:3px;'></div><div class='r' style='left:608px;top:405px;width:62px;height:17px;background:transparent;border:1px dotted #111;box-sizing:border-box;'></div><div class='t' style='left:624px;top:408px;font-size:12px;line-height:12px;color:#000;letter-spacing:-0.1px;'>Close</div><div class='r' style='left:624px;top:419px;width:8px;height:1px;background:#000;'></div><svg class='r' style='left:374px;top:374px;' width='46' height='40' viewBox='0 0 46 40'><path d='M4.5 37.6 L28.7 11.8 L24.3 9.1 L43.4 7.6 L35.8 24 L35 19.8 Z' fill='#fa2418'/></svg>
</body></html>
